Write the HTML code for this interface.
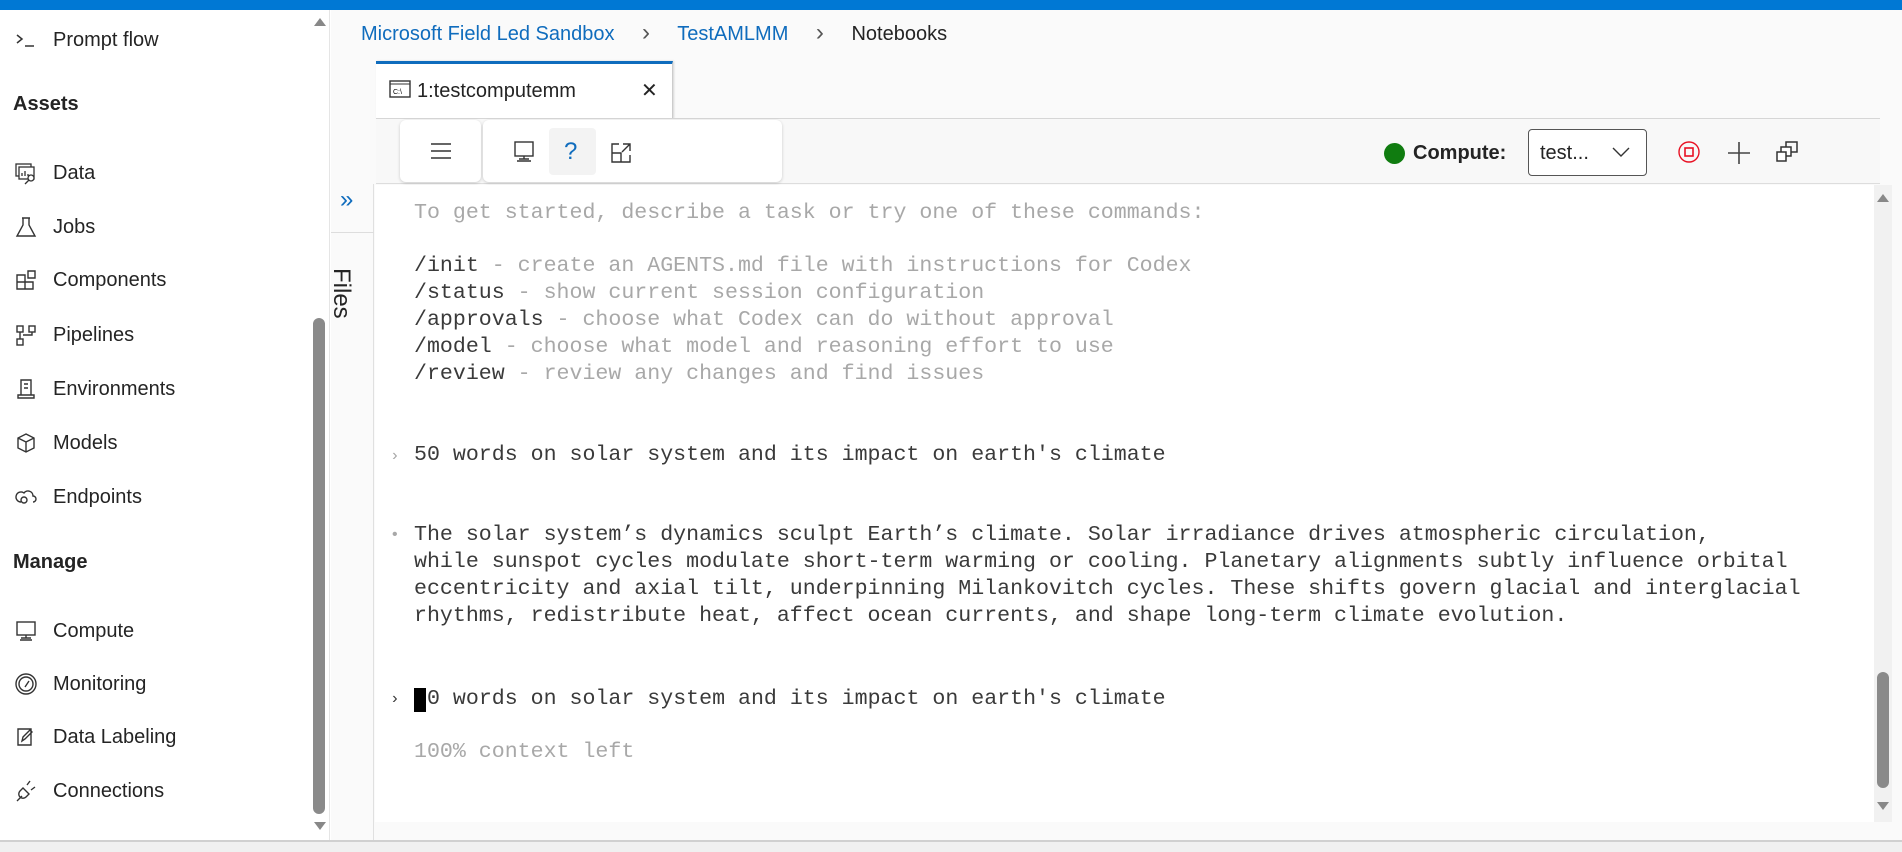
<!DOCTYPE html>
<html><head><meta charset="utf-8"><style>
*{box-sizing:border-box;margin:0;padding:0}
body{width:1902px;height:852px;overflow:hidden;background:#fff;font-family:"Liberation Sans",sans-serif;position:relative;color:#242424}
.abs{position:absolute}
.topbar{left:0;top:0;width:1902px;height:10px;background:#0078d4}
.side{left:0;top:10px;width:330px;height:830px;background:#fff;border-right:1px solid #e5e5e5}
.item{position:absolute;left:53px;font-size:20px;color:#242424;line-height:24px}
.ico{position:absolute;left:14px;width:24px;height:24px}
.hdr{position:absolute;left:13px;font-size:20px;font-weight:bold;line-height:24px}
.mono{font-family:"Liberation Mono",monospace;font-size:21.6px;white-space:pre;position:absolute;left:414px;line-height:27px}
.g{color:#a8a8a8}.d{color:#3a3a3a}
</style></head><body>
<div class="abs topbar"></div>
<div class="abs side">
 <svg class="ico" style="top:18px" viewBox="0 0 24 24" fill="none" stroke="#333" stroke-width="1.5"><path d="M3 7l5 4-5 4M11 18h9"/></svg>
 <div class="item" style="top:18px">Prompt flow</div>
 <div class="hdr" style="top:82px">Assets</div>
 <svg class="ico" style="top:151px" viewBox="0 0 24 24" fill="none" stroke="#333" stroke-width="1.3"><rect x="2" y="3" width="15" height="12"/><rect x="5" y="6" width="15" height="12" fill="#fff"/><path d="M8 15v-3M11 15v-5M14 15v-2"/><circle cx="17" cy="17" r="3" fill="#fff"/><path d="M15 19l-4 4"/></svg>
 <div class="item" style="top:151px">Data</div>
 <svg class="ico" style="top:205px" viewBox="0 0 24 24" fill="none" stroke="#333" stroke-width="1.4"><path d="M8 3h8M9 3v7L3 21h18L15 10V3"/></svg>
 <div class="item" style="top:205px">Jobs</div>
 <svg class="ico" style="top:258px" viewBox="0 0 24 24" fill="none" stroke="#333" stroke-width="1.4"><path d="M3 7h8v14H3zM3 14h16v7h-8M14 3h7v7h-7z"/></svg>
 <div class="item" style="top:258px">Components</div>
 <svg class="ico" style="top:313px" viewBox="0 0 24 24" fill="none" stroke="#333" stroke-width="1.4"><rect x="3" y="3" width="6" height="6"/><rect x="15" y="3" width="6" height="6"/><rect x="3" y="16" width="6" height="6"/><path d="M6 9v7M9 12h9V9"/></svg>
 <div class="item" style="top:313px">Pipelines</div>
 <svg class="ico" style="top:367px" viewBox="0 0 24 24" fill="none" stroke="#333" stroke-width="1.4"><path d="M7 3h10v15H7zM10 7h4M10 11h4M4 21h16v-3H4z"/></svg>
 <div class="item" style="top:367px">Environments</div>
 <svg class="ico" style="top:421px" viewBox="0 0 24 24" fill="none" stroke="#333" stroke-width="1.4"><path d="M12 3l8 4v10l-8 4-8-4V7zM4 7l8 4 8-4M12 11v10"/></svg>
 <div class="item" style="top:421px">Models</div>
 <svg class="ico" style="top:475px" viewBox="0 0 24 24" fill="none" stroke="#333" stroke-width="1.4"><path d="M7 17a5 5 0 1 1 3-9 5 5 0 0 1 9 3 3 3 0 0 1 0 6"/><circle cx="10" cy="15" r="3"/></svg>
 <div class="item" style="top:475px">Endpoints</div>
 <div class="hdr" style="top:540px">Manage</div>
 <svg class="ico" style="top:609px" viewBox="0 0 24 24" fill="none" stroke="#333" stroke-width="1.4"><rect x="3" y="3" width="18" height="13"/><path d="M12 16v3M6 21h12M7 19h10"/></svg>
 <div class="item" style="top:609px">Compute</div>
 <svg class="ico" style="top:662px" viewBox="0 0 24 24" fill="none" stroke="#333" stroke-width="1.4"><circle cx="12" cy="12" r="10"/><circle cx="12" cy="12" r="7"/><path d="M11 15l4-6"/></svg>
 <div class="item" style="top:662px">Monitoring</div>
 <svg class="ico" style="top:715px" viewBox="0 0 24 24" fill="none" stroke="#333" stroke-width="1.4"><path d="M4 4h13v16H4zM8 16l1-4 7-7 2 2-7 7z"/></svg>
 <div class="item" style="top:715px">Data Labeling</div>
 <svg class="ico" style="top:769px" viewBox="0 0 24 24" fill="none" stroke="#333" stroke-width="1.4"><path d="M3 22l5-5M16 2l-3 4M21 8l-4 3M9 9l6 6-3 3a4 4 0 0 1-6-6z"/></svg>
 <div class="item" style="top:769px">Connections</div>
 <div class="abs" style="left:314px;top:8px;width:0;height:0;border:6px solid transparent;border-bottom:8px solid #888;border-top:0"></div>
 <div class="abs" style="left:313px;top:308px;width:12px;height:496px;background:#8a8a8a;border-radius:6px"></div>
 <div class="abs" style="left:314px;top:812px;width:0;height:0;border:6px solid transparent;border-top:8px solid #888;border-bottom:0"></div>
</div>
<div class="abs" style="left:0;top:840px;width:1902px;height:12px;background:#f0f0f0;border-top:2px solid #d0d0d0"></div>
<!-- main -->
<div class="abs" style="left:331px;top:10px;width:1571px;height:830px;background:#fafafa"></div>
<div class="abs" style="left:361px;top:23px;font-size:20px;color:#0f6cbd;white-space:nowrap">Microsoft Field Led Sandbox <span style="color:#555;margin:0 22px;font-size:24px;line-height:20px">&#8250;</span> TestAMLMM <span style="color:#555;margin:0 22px;font-size:24px;line-height:20px">&#8250;</span> <span style="color:#242424">Notebooks</span></div>
<!-- tab -->
<div class="abs" style="left:376px;top:61px;width:297px;height:58px;background:#fff;border-top:3px solid #0f6cbd;border-right:1px solid #ccc;box-shadow:1px 0 2px rgba(0,0,0,.15)"></div>
<svg class="abs" style="left:389px;top:80px" width="22" height="18" viewBox="0 0 22 18"><rect x="1" y="1" width="20" height="16" fill="#fff" stroke="#333" stroke-width="1.4"/><path d="M1 4h20" stroke="#333"/><text x="4" y="14" font-size="7" font-family="Liberation Sans">C:\</text></svg>
<div class="abs" style="left:417px;top:80px;font-size:20px">1:testcomputemm</div>
<div class="abs" style="left:641px;top:78px;font-size:20px">✕</div>
<div class="abs" style="left:376px;top:118px;width:1504px;height:1px;background:#d6d6d6"></div>
<!-- toolbar -->
<div class="abs" style="left:376px;top:119px;width:1504px;height:65px;background:#f8f8f8;border-bottom:1px solid #ddd"></div>
<div class="abs" style="left:400px;top:120px;width:81px;height:62px;background:#fff;border-radius:6px;box-shadow:0 1px 3px rgba(0,0,0,.18)"></div>
<div class="abs" style="left:483px;top:120px;width:299px;height:62px;background:#fff;border-radius:6px;box-shadow:0 1px 3px rgba(0,0,0,.18)"></div>
<svg class="abs" style="left:430px;top:141px" width="22" height="20"><path d="M1 3h20M1 10h20M1 17h20" stroke="#333" stroke-width="1.4"/></svg>
<svg class="abs" style="left:512px;top:140px" width="24" height="24" viewBox="0 0 24 24" fill="none" stroke="#333" stroke-width="1.4"><rect x="3" y="2" width="18" height="14"/><path d="M12 16v3M5 21h14M7 19h10"/></svg>
<div class="abs" style="left:549px;top:128px;width:47px;height:47px;background:#f3f3f3;border-radius:4px"></div>
<div class="abs" style="left:564px;top:138px;font-size:24px;color:#0f6cbd">?</div>
<svg class="abs" style="left:610px;top:142px" width="22" height="22" viewBox="0 0 22 22" fill="none" stroke="#333" stroke-width="1.4"><path d="M9 2H2v18h18v-7M2 11h9v9M13 2h7v7M20 2l-8 8"/></svg>
<div class="abs" style="left:1384px;top:143px;width:21px;height:21px;border-radius:50%;background:#107c10"></div>
<div class="abs" style="left:1413px;top:142px;font-size:20px;font-weight:bold">Compute:</div>
<div class="abs" style="left:1528px;top:129px;width:119px;height:47px;border:1px solid #555;border-radius:4px;background:#fff"></div>
<div class="abs" style="left:1540px;top:142px;font-size:20px">test...</div>
<svg class="abs" style="left:1612px;top:146px" width="18" height="12"><path d="M1 2l8 8 8-8" fill="none" stroke="#333" stroke-width="1.4"/></svg>
<svg class="abs" style="left:1677px;top:140px" width="24" height="24"><circle cx="12" cy="12" r="10" fill="none" stroke="#e81123" stroke-width="1.4"/><rect x="8" y="8" width="8" height="8" fill="none" stroke="#e81123" stroke-width="1.6"/></svg>
<svg class="abs" style="left:1727px;top:141px" width="24" height="24"><path d="M12 1v22M1 12h22" stroke="#444" stroke-width="1.6"/></svg>
<svg class="abs" style="left:1775px;top:140px" width="24" height="24" viewBox="0 0 24 24" fill="none" stroke="#333" stroke-width="1.5"><rect x="11" y="2" width="11" height="10"/><rect x="6" y="7" width="10" height="9" fill="#fff"/><rect x="2" y="12" width="9" height="9" fill="#fff"/></svg>
<!-- files strip -->
<div class="abs" style="left:331px;top:184px;width:43px;height:656px;background:#fafafa;border-right:1px solid #e0e0e0"></div>
<div class="abs" style="left:331px;top:232px;width:43px;height:1px;background:#ddd"></div>
<div class="abs" style="left:340px;top:186px;font-size:24px;color:#0f6cbd">»</div>
<div class="abs" style="top:268px;font-size:24px;transform:rotate(90deg);transform-origin:left top;left:355px">Files</div>
<!-- terminal -->
<div class="abs" style="left:375px;top:185px;width:1499px;height:637px;background:#fff"></div>
<div class="abs" style="left:1874px;top:185px;width:18px;height:637px;background:#f1f1f1"></div>
<div class="abs" style="left:1877px;top:194px;width:0;height:0;border:6px solid transparent;border-bottom:8px solid #888;border-top:0"></div>
<div class="abs" style="left:1877px;top:672px;width:12px;height:116px;background:#8a8a8a;border-radius:6px"></div>
<div class="abs" style="left:1877px;top:802px;width:0;height:0;border:6px solid transparent;border-top:8px solid #888;border-bottom:0"></div>
<div class="mono g" style="top:200px">To get started, describe a task or try one of these commands:</div>
<div class="mono" style="top:253px"><span class="d">/init</span><span class="g"> - create an AGENTS.md file with instructions for Codex</span></div>
<div class="mono" style="top:280px"><span class="d">/status</span><span class="g"> - show current session configuration</span></div>
<div class="mono" style="top:307px"><span class="d">/approvals</span><span class="g"> - choose what Codex can do without approval</span></div>
<div class="mono" style="top:334px"><span class="d">/model</span><span class="g"> - choose what model and reasoning effort to use</span></div>
<div class="mono" style="top:361px"><span class="d">/review</span><span class="g"> - review any changes and find issues</span></div>
<div class="mono g" style="top:443px;left:390px;font-size:16px">›</div>
<div class="mono d" style="top:442px">50 words on solar system and its impact on earth's climate</div>
<div class="mono g" style="top:522px;left:390px;font-size:16px">•</div>
<div class="mono d" style="top:522px">The solar system’s dynamics sculpt Earth’s climate. Solar irradiance drives atmospheric circulation,
while sunspot cycles modulate short-term warming or cooling. Planetary alignments subtly influence orbital
eccentricity and axial tilt, underpinning Milankovitch cycles. These shifts govern glacial and interglacial
rhythms, redistribute heat, affect ocean currents, and shape long-term climate evolution.</div>
<div class="mono d" style="top:686px;left:390px;font-size:16px">›</div>
<div class="abs" style="left:414px;top:688px;width:12px;height:24px;background:#000"></div>
<div class="mono d" style="top:686px;left:427px">0 words on solar system and its impact on earth's climate</div>
<div class="mono g" style="top:739px">100% context left</div>
</body></html>
